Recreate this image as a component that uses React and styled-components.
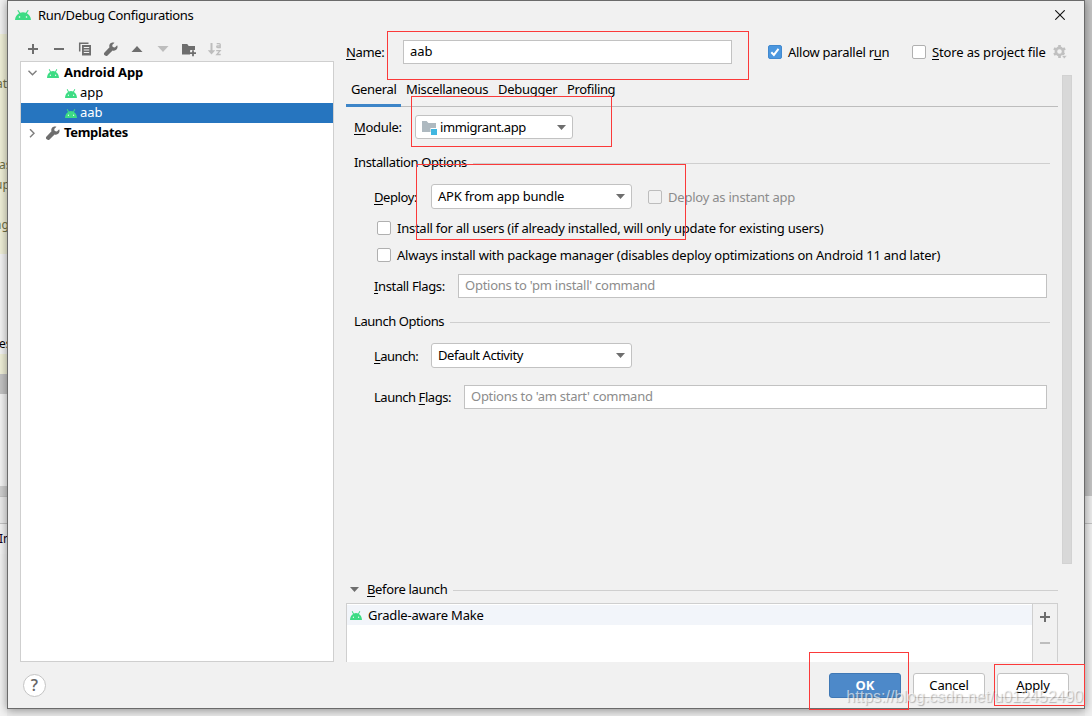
import React from "react";
import styled, { createGlobalStyle, css } from "styled-components";

const Global = createGlobalStyle`
  * { box-sizing: border-box; }
  html, body { margin: 0; padding: 0; }
  body {
    width: 1092px; height: 716px; overflow: hidden; background: #ebebeb;
    font-family: "Noto Sans", "Open Sans", sans-serif; font-size: 13px; color: #000;
  }
  u { text-decoration: underline; text-decoration-thickness: 1px; text-underline-offset: 2px; text-decoration-skip-ink: none; }
`;

const Screen = styled.div`
  position: relative; width: 1092px; height: 716px; overflow: hidden;
  display: grid; grid-template-columns: 7px 1078px 7px;
`;
const Strip = styled.div`display: flex; flex-direction: column; overflow: hidden;`;
const Band = styled.div`
  flex: none; height: ${p => p.$h}px; background: ${p => p.$bg}; color: ${p => p.$c || "#6f6f45"};
  line-height: ${p => p.$h}px; white-space: nowrap; overflow: hidden; text-indent: ${p => p.$in || 0}px;
  font-size: 12px;
`;
const Dialog = styled.div`
  position: relative; height: 709px; background: #f1f1f1; border: 1px solid #6b6b6b;
  box-shadow: 0 1px 9px rgba(0,0,0,.42); display: flex; flex-direction: column;
`;
const T = styled.span`
  letter-spacing: ${p => p.$ls || 0}px; white-space: nowrap; line-height: 18px;
  font-weight: ${p => (p.$b ? 700 : 400)};
  ${p => p.$c && css`color: ${p.$c};`}
`;
const TitleBar = styled.div`
  flex: none; height: 30px; padding: 0 19px 2px 7px; display: flex; align-items: center; gap: 7px;
  & > svg:last-child { margin-left: auto; }
`;
const Main = styled.div`flex: none; height: 631px; display: flex; gap: 12px; padding-left: 12px;`;
const Side = styled.div`width: 314px; display: flex; flex-direction: column;`;
const Toolbar = styled.div`
  flex: none; height: 30px; display: flex; align-items: center; gap: 10px; padding: 6px 0 0 5px;
`;
const Tree = styled.div`flex: 1; background: #fff; border: 1px solid #cfcfcf; padding-top: 1px;`;
const TreeRow = styled.div`
  height: 20px; display: flex; align-items: center; padding-left: ${p => p.$in}px; gap: ${p => p.$gap || 3}px;
  ${p => p.$sel && css`background: #2675bf; color: #fff;`}
  & > svg { flex: none; }
  & > span { padding-bottom: 2px; }
`;
const Content = styled.div`width: 726px; display: flex; flex-direction: column;`;
const NameRow = styled.div`
  flex: none; height: 44px; padding-bottom: 2px; display: flex; align-items: center;
`;
const NameLabel = styled.div`width: 57px; flex: none; display: flex; padding-bottom: 1px;`;
const Field = styled.div`
  height: 24px; width: ${p => p.$w}px; background: #fff; border: 1px solid #c2c2c2; padding: 0 5px 2px 6px;
  display: flex; align-items: center; flex: none;
`;
const Check = styled.div`
  flex: none; width: 14px; height: 14px; border-radius: 2px; border: 1px solid #b0b0b0; background: #fff;
  display: flex; align-items: center; justify-content: center;
  ${p => p.$on && css`background: #4b97df; border-color: #4189cf;`}
  ${p => p.$off && css`background: #f2f2f2; border-color: #bdbdbd;`}
`;
const CheckLabel = styled.label`
  flex: none; width: ${p => (p.$w ? p.$w + "px" : "auto")};
  display: flex; align-items: center; gap: 6px; margin-left: ${p => p.$ml || 0}px;
`;
const Scroller = styled.div`flex: none; height: 489px; display: flex; justify-content: space-between;`;
const Pane = styled.div`width: 712px; display: flex; flex-direction: column;`;
const Thumb = styled.div`width: 10px; background: #d8d8d8; border: 1px solid #d2d2d2;`;
const Tabs = styled.div`flex: none; height: 32px; display: flex; border-bottom: 1px solid #bdbdbd;`;
const Tab = styled.div`
  height: 32px; width: ${p => p.$w}px; padding: 5px 0 0 5px; display: flex; align-items: flex-start;
  ${p => p.$on && css`border-bottom: 3px solid #3d85c8; position: relative;`}
`;
const Row = styled.div`
  flex: none; height: ${p => p.$h}px; margin-top: ${p => p.$mt || 0}px; padding-left: ${p => p.$in || 0}px;
  display: flex; align-items: center;
`;
const Lab = styled.div`width: ${p => p.$w}px; flex: none; display: flex;`;
const Combo = styled.div`
  width: ${p => p.$w}px; height: ${p => p.$h || 25}px; flex: none; background: #fff; border: 1px solid #c2c2c2;
  border-radius: 3px; display: flex; align-items: center; padding: 0 6px 0 6px; gap: 3px;
  & > span { padding-bottom: ${p => p.$up || 0}px; }
  & > svg:last-child { margin-left: auto; }
`;
const Section = styled.div`
  flex: none; height: 18px; margin-top: ${p => p.$mt}px; padding: 0 ${p => p.$r}px 0 ${p => p.$l}px;
  display: flex; align-items: center; gap: ${p => p.$gap || 6}px;
  &::after { content: ""; flex: 1; height: 1px; background: #cfcfcf; margin-top: 2px; margin-left: ${p => 6 - (p.$gap || 6)}px; }
`;
const Tasks = styled.div`
  flex: 1; width: 712px; margin-top: 5px; border: 1px solid #cfcfcf; border-bottom: 0; display: flex;
`;
const TaskList = styled.div`flex: 1; background: #fff; padding-top: 1px;`;
const TaskRow = styled.div`
  height: 20px; background: #f2f5fa; display: flex; align-items: center; gap: 6px; padding-left: 3px;
`;
const TaskTools = styled.div`
  width: 25px; border-left: 1px solid #cfcfcf; display: flex; flex-direction: column; align-items: center;
  gap: 10px; padding-top: 5px;
`;
const Footer = styled.div`
  flex: 1; display: flex; align-items: center; padding: 0 15px 0 15px; gap: 12px;
`;
const Help = styled.div`
  width: 23px; height: 23px; border-radius: 50%; border: 1px solid #c4c4c4; background: #fff; color: #666;
  font: 600 16px/21px "Open Sans", sans-serif; text-align: center; margin-right: auto;
`;
const Button = styled.button`
  width: 72px; height: 25px; border-radius: 3px; border: 1px solid #c2c2c2; background: #fff; padding: 0;
  font: inherit; color: #000; display: flex; align-items: center; justify-content: center;
  ${p => p.$primary && css`background: #4d89c9; border-color: #3f78b5; color: #fff;`}
`;
const Mark = styled.div`
  position: absolute; left: ${p => p.$x}px; top: ${p => p.$y}px; width: ${p => p.$w}px; height: ${p => p.$h}px;
  border: 1px solid #fb3a3a; pointer-events: none;
`;
const Watermark = styled.div`
  position: absolute; right: 9px; bottom: 9px; font: 16px/20px "Liberation Sans", Arial, sans-serif;
  color: rgba(255,255,255,.6); text-shadow: 1px 1px 1px rgba(90,90,90,.4); white-space: nowrap;
`;

const Android = ({ w = 12, h = 9 }) => (
  <svg width={w} height={h} viewBox="0 0 16 10" preserveAspectRatio="none">
    <path d="M0 10C.2 6.8 1.8 4.6 4.1 3.3L2.300.6l1-.6L5.200 2.800a8.200 8.200 0 0 1 5.600 0L12.700 0l1 .6-1.800 2.700C14.200 4.600 15.800 6.800 16 10z" fill="#3ddc84" />
    <circle cx="4.500" cy="7" r=".8" fill="#fff" /><circle cx="11.500" cy="7" r=".8" fill="#fff" />
  </svg>
);
const Svg = ({ s = 16, children }) => <svg width={s} height={s} viewBox={`0 0 ${s} ${s}`} fill="none">{children}</svg>;
const Plus = ({ c = "#6e6e6e" }) => <Svg><path d="M3 8h10M8 3v10" stroke={c} strokeWidth="2" /></Svg>;
const Minus = ({ c = "#6e6e6e" }) => <Svg><path d="M3 8h10" stroke={c} strokeWidth="2" /></Svg>;
const Copy = () => (
  <Svg>
    <path d="M2.700 10.500V2.200H11.500" stroke="#6e6e6e" strokeWidth="1.500" />
    <path d="M5 4h9v10.500H5z" fill="#6e6e6e" />
    <path d="M6.800 6.500h5.400M6.800 9h5.400M6.800 11.500h5.400" stroke="#f1f1f1" strokeWidth="1.200" />
  </Svg>
);
const Wrench = () => (
  <Svg>
    <path d="M14.200 4.300 11.900 6.600 9.700 6.100 9.200 4 11.500 1.700C9.700 1 7.900 1.500 6.900 2.900 6.200 3.900 6.100 5.100 6.500 6.300L1.300 11.700C.8 12.300.8 13.200 1.400 13.900L2.100 14.600C2.800 15.200 3.700 15.200 4.300 14.700L9.600 9.400C11 9.900 12.500 9.600 13.500 8.500 14.600 7.400 14.900 5.800 14.200 4.300Z" fill="#6e6e6e" />
  </Svg>
);
const Up = () => <Svg><path d="M2.500 11 8 5l5.500 6z" fill="#6e6e6e" /></Svg>;
const Down = () => <Svg><path d="M2.500 5h11L8 11z" fill="#bdbdbd" /></Svg>;
const Folder = () => (
  <Svg>
    <path d="M1 3h5.200l1.500 2H14v4h-4.800v4.500H1z" fill="#6e6e6e" />
    <path d="M12 9.200v6M9 12.200h6" stroke="#f1f1f1" strokeWidth="3.400" />
    <path d="M12 9.200v6M9 12.200h6" stroke="#6e6e6e" strokeWidth="1.800" />
  </Svg>
);
const Sort = () => (
  <Svg>
    <path d="M4.500 2v8" stroke="#bdbdbd" strokeWidth="2" /><path d="M.8 9.300h7.400L4.500 13.500z" fill="#bdbdbd" />
    <path d="M9.700 2.700h2.600q.9 0 .9.900V7.200M13.200 4.900h-2.500q-1 0-1 .8t1 .8h2.500" stroke="#bdbdbd" strokeWidth="1.300" />
    <path d="M9.200 9.700h3.900L9.800 13.500h3.900" stroke="#bdbdbd" strokeWidth="1.300" />
  </Svg>
);
const ArrowDown = () => <svg width="9" height="5" viewBox="0 0 9 5"><path d="M0 0h9L4.500 5z" fill="#6e6e6e" /></svg>;
const ModuleIcon = () => (
  <svg width="15" height="15" viewBox="1 0 15 15">
    <path d="M1 1h4.600l1.800 2H15v5H9.500v4H1z" fill="#aeb9c0" /><path d="M10 9h6v6h-6z" fill="#40b6e0" />
  </svg>
);
const Chevron = ({ open }) => (
  <svg width="9" height="9" viewBox="0 0 9 9" fill="none" stroke="#7d7d7d" strokeWidth="1.400">
    <path d={open ? "M.5 1.800l4 4 4-4" : "M2 .2l4 4-4 4"} />
  </svg>
);
const Gear = () => (
  <Svg>
    <circle cx="7.500" cy="7.500" r="3.600" stroke="#c0c0c0" strokeWidth="2.600" />
    <g stroke="#c0c0c0" strokeWidth="2.600">
      <path d="M7.500 1v2.500M7.500 11.500V14M1.900 4.300l2.100 1.200M11 9.500l1.400.8M1.900 10.700 4 9.500M11 5.500l2.100-1.200" />
    </g>
    <path d="M9.500 11.500h5.500L12.300 15z" fill="#c0c0c0" stroke="#f1f1f1" strokeWidth=".6" />
  </Svg>
);
const Close = () => <svg width="10" height="10" viewBox="0 0 10 10"><path d="M.3.300l9.400 9.400M9.700.300L.3 9.700" stroke="#111" strokeWidth="1.100" /></svg>;
const Tick = () => <svg width="10" height="10" viewBox="0 0 10 10" fill="none"><path d="M1.300 5.200l2.600 2.700L8.500 1.800" stroke="#fff" strokeWidth="2" /></svg>;

const leftBands = [
  [34, "#f2f2f2"], [40, "#f0f0d8"], [20, "#f0f0d8", "at", -4], [61, "#f0f0d8"], [20, "#f0f0d8", "as", -1], [20, "#f0f0d8", "up", -5],
  [20, "#f0f0d8"], [20, "#f0f0d8", "ng", -6], [19, "#f0f0d8"], [80, "#f4f4f4"], [20, "#f4f4f4", "es", -1, "#000"],
  [20, "#f0f0d8"], [20, "#c4c4c4"], [92, "#f4f4f4"], [10, "#cfcfcf"], [1, "#c4c4c4"], [26, "#ececec"], [1, "#c4c4c4"],
  [30, "#f4f4f4", "In", -1, "#102"], [162, "#f2f2f2"],
];

export default function App() {
  return (
    <>
      <Global />
      <Screen>
        <Strip>
          {leftBands.map(([h, bg, t, i, c], k) => <Band key={k} $h={h} $bg={bg} $in={i} $c={c}>{t}</Band>)}
        </Strip>
        <Dialog>
          <TitleBar>
            <Android w={16} h={10} /><T $ls={-0.35}>Run/Debug Configurations</T><Close />
          </TitleBar>
          <Main>
            <Side>
              <Toolbar><Plus /><Minus /><Copy /><Wrench /><Up /><Down /><Folder /><Sort /></Toolbar>
              <Tree>
                <TreeRow $in={7} $gap={5}><Chevron open /><TreeRow $in={5} $gap={5}><Android /><T $b $ls={-0.1}>Android App</T></TreeRow></TreeRow>
                <TreeRow $in={44}><Android /><T>app</T></TreeRow>
                <TreeRow $in={44} $sel><Android /><T>aab</T></TreeRow>
                <TreeRow $in={7} $gap={8}><Chevron /><TreeRow $in={0} $gap={3}><Wrench /><T $b $ls={-0.33}>Templates</T></TreeRow></TreeRow>
              </Tree>
            </Side>
            <Content>
              <NameRow>
                <NameLabel><T $ls={-0.35}><u>N</u>ame:</T></NameLabel>
                <Field $w={329}><T>aab</T></Field>
                <CheckLabel $ml={36} $w={121}><Check $on><Tick /></Check><T $ls={-0.27}>Allow parallel r<u>u</u>n</T></CheckLabel>
                <CheckLabel $ml={23} $w={134}><Check /><T $ls={-0.15}><u>S</u>tore as project file</T></CheckLabel>
                <Row $h={16} $in={6}><Gear /></Row>
              </NameRow>
              <Scroller>
                <Pane>
                  <Tabs>
                    <Tab $w={55} $on><T $ls={-0.35}>General</T></Tab>
                    <Tab $w={92}><T $ls={-0.33}>Miscellaneous</T></Tab>
                    <Tab $w={69}><T $ls={-0.28}>Debugger</T></Tab>
                    <Tab $w={58}><T $ls={-0.35}>Profiling</T></Tab>
                  </Tabs>
                  <Row $h={24} $mt={8} $in={8}>
                    <Lab $w={61}><T $ls={-0.3}><u>M</u>odule:</T></Lab>
                    <Combo $w={158} $h={24}><ModuleIcon /><T $ls={-0.38}>immigrant.app</T><ArrowDown /></Combo>
                  </Row>
                  <Section $mt={14} $l={8} $r={8}><T $ls={-0.37}>Installation Options</T></Section>
                  <Row $h={25} $mt={13} $in={28}>
                    <Lab $w={57}><T $ls={-0.4}><u>D</u>eploy:</T></Lab>
                    <Combo $w={201} $up={1}><T $ls={-0.2}>APK from app bundle</T><ArrowDown /></Combo>
                    <CheckLabel $ml={16}><Check $off /><T $c="#8c8c8c" $ls={-0.22}>Deploy as instant app</T></CheckLabel>
                  </Row>
                  <Row $h={18} $mt={10} $in={31}>
                    <CheckLabel><Check /><T $ls={-0.25}>Install for all users (if already installed, will only update for existing users)</T></CheckLabel>
                  </Row>
                  <Row $h={18} $mt={9} $in={31}>
                    <CheckLabel><Check /><T $ls={-0.23}>Always install with package manager (disables deploy optimizations on Android 11 and later)</T></CheckLabel>
                  </Row>
                  <Row $h={24} $mt={10} $in={28}>
                    <Lab $w={84}><T $ls={-0.36}><u>I</u>nstall Flags:</T></Lab>
                    <Field $w={589}><T $c="#8c8c8c" $ls={-0.26}>Options to 'pm install' command</T></Field>
                  </Row>
                  <Section $mt={14} $l={8} $r={8}><T $ls={-0.43}>Launch Options</T></Section>
                  <Row $h={25} $mt={13} $in={28}>
                    <Lab $w={57}><T $ls={-0.55}><u>L</u>aunch:</T></Lab>
                    <Combo $w={201} $up={1}><T $ls={-0.44}>Default Activity</T><ArrowDown /></Combo>
                  </Row>
                  <Row $h={24} $mt={17} $in={28}>
                    <Lab $w={90}><T $ls={-0.46}>Launch <u>F</u>lags:</T></Lab>
                    <Field $w={583}><T $c="#8c8c8c" $ls={-0.27}>Options to 'am start' command</T></Field>
                  </Row>
                </Pane>
                <Thumb />
              </Scroller>
              <Section $mt={16} $l={4} $r={14} $gap={8}><ArrowDown /><T $ls={-0.35}><u>B</u>efore launch</T></Section>
              <Tasks>
                <TaskList><TaskRow><Android /><T $ls={-0.18}>Gradle-aware Make</T></TaskRow></TaskList>
                <TaskTools><Plus /><Minus c="#bdbdbd" /></TaskTools>
              </Tasks>
            </Content>
          </Main>
          <Footer>
            <Help>?</Help>
            <Button $primary><T $b>OK</T></Button>
            <Button><T $ls={-0.2}>Cancel</T></Button>
            <Button><T $ls={-0.2}><u>A</u>pply</T></Button>
          </Footer>
        </Dialog>
        <Strip>
          <Band $h={496} $bg="#c4c4c4" /><Band $h={27} $bg="#ececec" /><Band $h={1} $bg="#c4c4c4" /><Band $h={192} $bg="#f0f0f0" />
        </Strip>
        <Mark $x={387} $y={31} $w={362} $h={49} />
        <Mark $x={411} $y={96} $w={201} $h={51} />
        <Mark $x={416} $y={164} $w={270} $h={76} />
        <Mark $x={809} $y={652} $w={100} $h={58} />
        <Mark $x={994} $y={664} $w={91} $h={42} />
        <Watermark>https://blog.csdn.net/u012452490</Watermark>
      </Screen>
    </>
  );
}
